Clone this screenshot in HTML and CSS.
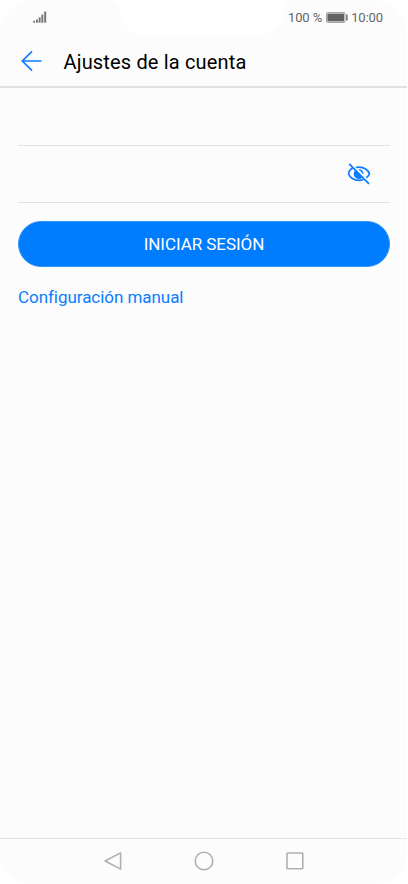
FILE: index.html
```html
<!DOCTYPE html>
<html lang="es">
<head>
<meta charset="utf-8">
<title>Ajustes de la cuenta</title>
<link rel="stylesheet" href="styles.css">
</head>
<body>
<div class="screen">
  <svg class="notch" width="180" height="34" viewBox="0 0 180 34"><path d="M0 0C8 1 11 4 11 13C12 26 22 34 35 34H150C163 34 174 26 175 13C175.500 5 176 2 180 0Z" fill="#fff"/></svg>
  <div class="status">
    <svg class="signal" width="14" height="12" viewBox="0 0 14 12"><path d="M.2 9.800H2v2H.2zM3 8.400h1.900v3.400H3zM5.700 6.200h1.900v5.600H5.700zM8.400 3.600h1.900v8.200H8.400zM11.200.6h2v11.200h-2z" fill="#777"/></svg>
    <div class="status-right">
      <span class="percent">100 %</span>
      <svg class="battery" width="22" height="11" viewBox="0 0 22 11"><rect x=".5" y=".5" width="18.5" height="10" rx="1" fill="#ddd" stroke="#a5a5a5"/><rect x="1.5" y="1.7" width="16.5" height="7.6" fill="#626262"/><rect x="20" y="2.500" width="1.600" height="6" fill="#777"/></svg>
      <span class="clock">10:00</span>
    </div>
  </div>
  <header class="header">
    <svg class="back" width="22" height="22" viewBox="0 0 22 22"><path d="M20.500 11H1.300M11 1.300L1.300 11l9.700 9.700" fill="none" stroke="#0a7dff" stroke-width="1.700"/></svg>
    <h1>Ajustes de la cuenta</h1>
  </header>
  <main class="form">
    <div class="field"></div>
    <div class="field password">
      <svg width="24" height="22" viewBox="0 0 24 22"><g fill="none" stroke="#0a7dff" stroke-width="1.700"><path d="M5.800 5.100C3.300 6.500 1.600 8.800 1.600 10.700C2.700 14.600 7 17.300 12 17.300c1.600 0 3-.3 4.400-.8M8.800 4.500c1-.3 2.100-.4 3.200-.4c5 0 9.300 2.700 10.400 6.600c-.4 1.600-1.500 3-3.100 4.100"/><path d="M2.200.8L22 20.800"/></g><path d="M8.200 7.300A4.800 4.800 0 1 0 15.500 14.500ZM11.300 6.200a4.600 4.600 0 0 1 5.200 5.200l-2-1.900c.1-.9-.6-1.500-1.500-1.600Z" fill="#0a7dff"/></svg>
    </div>
    <button class="login" type="button">INICIAR SESIÓN</button>
    <a class="manual">Configuración manual</a>
  </main>
  <nav class="nav">
    <svg width="20" height="20" viewBox="0 0 20 20"><path d="M17.600 1.900V18.100L2.100 10Z"/></svg>
    <svg width="20" height="20" viewBox="0 0 20 20"><circle cx="10" cy="10" r="8.800"/></svg>
    <svg width="20" height="20" viewBox="0 0 20 20"><rect x="2" y="2" width="15.800" height="15.800" rx=".7"/></svg>
  </nav>
</div>
</body>
</html>
```
FILE: styles.css
```css
* { box-sizing: border-box; }
body {
  margin: 0;
  background: #fff;
  font-family: Roboto, "Liberation Sans", sans-serif;
}
.screen {
  position: relative;
  display: flex;
  flex-direction: column;
  width: 407px;
  height: 884px;
  background: #fcfcfc;
  border-radius: 34px 34px 30px 30px;
  overflow: hidden;
}
.notch {
  position: absolute;
  top: 0;
  left: 110px;
}
.status {
  display: flex;
  justify-content: space-between;
  align-items: center;
  height: 34px;
  padding: 0 24px 0 33px;
  font-size: 13px;
  line-height: 16px;
  color: #666;
}
.status-right {
  display: flex;
  align-items: center;
}
.percent,
.clock {
  padding-top: 1px;
  letter-spacing: -0.1px;
}
.battery { margin: 0 3px 0 4px; }
.header {
  display: flex;
  align-items: center;
  height: 54px;
  padding: 2px 21px 0;
  border-bottom: 2px solid #e2e2e2;
}
h1 {
  margin: 2px 0 0 20.5px;
  font-size: 20px;
  font-weight: 400;
  line-height: 24px;
  letter-spacing: 0.16px;
  color: #000;
}
.form {
  flex: 1;
  display: flex;
  flex-direction: column;
  padding: 0 17px 0 18px;
}
.field {
  height: 58px;
  border-bottom: 1px solid #e1e1e1;
}
.password {
  display: flex;
  align-items: center;
  justify-content: flex-end;
  height: 57px;
  padding-right: 19px;
}
.login {
  height: 46px;
  margin-top: 18px;
  padding: 0;
  border: 1px solid #2f91fa;
  border-radius: 23px;
  background: #007dff;
  color: #fff;
  font: 400 17px/24px Roboto, "Liberation Sans", sans-serif;
  letter-spacing: -0.05px;
}
.manual {
  align-self: flex-start;
  margin-top: 18px;
  font-size: 17px;
  line-height: 24px;
  letter-spacing: -0.05px;
  color: #0a7dff;
}
.nav {
  display: flex;
  justify-content: center;
  align-items: center;
  gap: 71px;
  height: 46px;
  padding-bottom: 2px;
  border-top: 1px solid #e4e4e4;
}
.nav svg {
  fill: none;
  stroke: #b0b0b0;
  stroke-width: 1.6;
  stroke-linejoin: round;
}
```
